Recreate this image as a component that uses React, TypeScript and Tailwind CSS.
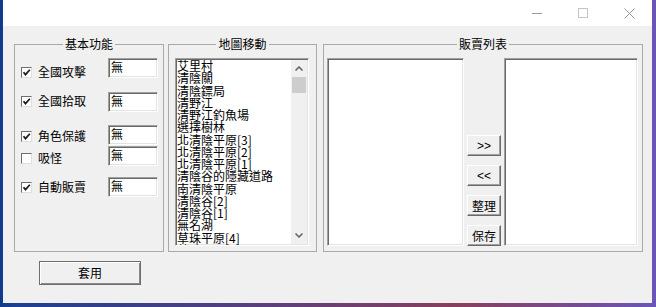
import React from "react";

const FONT = "font-['Noto_Sans_CJK_TC','Noto_Sans_CJK_SC',sans-serif]";

function Check({ checked }: { checked: boolean }) {
  return (
    <span className="w-[11px] h-[11px] shrink-0 bg-white border border-t-[#6e6e6e] border-l-[#6e6e6e] border-b-[#dedede] border-r-[#dedede] flex items-center justify-center">
      {checked && (
        <svg width="9" height="9" viewBox="0 0 9 9">
          <path d="M1.5 4.2 L3.5 6.6 L7.8 1.8" stroke="#1a1a1a" strokeWidth="1.7" fill="none" />
        </svg>
      )}
    </span>
  );
}

function Sunken({ className = "", children }: { className?: string; children?: React.ReactNode }) {
  return (
    <div
      className={
        "bg-white border border-t-[#a0a0a0] border-l-[#a0a0a0] border-b-white border-r-white shadow-[inset_1px_1px_0_#696969,inset_-1px_-1px_0_#e3e3e3] " +
        className
      }
    >
      {children}
    </div>
  );
}

function Btn({ children, className = "" }: { children: React.ReactNode; className?: string }) {
  return (
    <div
      className={
        "bg-[#f0f0f0] border border-t-white border-l-white border-b-[#696969] border-r-[#696969] shadow-[inset_-1px_-1px_0_#a0a0a0] flex items-center justify-center text-[12px] text-black " +
        className
      }
    >
      {children}
    </div>
  );
}

function Group({ title, className = "", children }: { title: string; className?: string; children: React.ReactNode }) {
  return (
    <fieldset className={"border border-[#a9a9a9] h-[215px] " + className}>
      <legend className="mx-auto px-[2px] text-[12px] leading-[14px] text-black">{title}</legend>
      {children}
    </fieldset>
  );
}

const rows = [
  { label: "全國攻擊", checked: true, mt: "mt-[14px]" },
  { label: "全國拾取", checked: true, mt: "mt-[15px]" },
  { label: "角色保護", checked: true, mt: "mt-[21px]" },
  { label: "吸怪", checked: false, mt: "mt-[8px]" },
  { label: "自動販賣", checked: true, mt: "mt-[15px]" },
];
const inputMts = ["mt-[7px]", "mt-[14px]", "mt-[13px]", "mt-[1px]", "mt-[11px]"];

const maps = [
  "艾里村",
  "清陰關",
  "清陰鏢局",
  "清野江",
  "清野江釣魚場",
  "選擇樹林",
  "北清陰平原[3]",
  "北清陰平原[2]",
  "北清陰平原[1]",
  "清陰谷的隱藏道路",
  "南清陰平原",
  "清陰谷[2]",
  "清陰谷[1]",
  "無名湖",
  "草珠平原[4]",
  "草珠平原[3]",
];

export default function App() {
  return (
    <div
      className={
        "w-[656px] h-[307px] pl-[3px] pr-[4px] pb-[4px] flex flex-col overflow-hidden bg-[linear-gradient(90deg,#0f3a8c_0%,#1d3f93_2%,#5b3f7e_40%,#8a3f5e_70%,#6a55b8_100%)] " +
        FONT
      }
    >
      <div className="flex-1 flex flex-col bg-[#f0f0f0]">
        {/* title bar */}
        <div className="h-[26px] bg-white flex justify-end shrink-0">
          <div className="w-[46px] h-[26px] flex items-center justify-center">
            <svg width="10" height="10" viewBox="0 0 10 10">
              <path d="M0 5.5 H10" stroke="#9a9a9a" strokeWidth="1" />
            </svg>
          </div>
          <div className="w-[46px] h-[26px] flex items-center justify-center">
            <svg width="10" height="10" viewBox="0 0 10 10">
              <rect x="0.5" y="0.5" width="9" height="9" stroke="#c4c4c4" strokeWidth="1" fill="none" />
            </svg>
          </div>
          <div className="w-[46px] h-[26px] flex items-center justify-center">
            <svg width="11" height="11" viewBox="0 0 11 11">
              <path d="M0.5 0.5 L10.5 10.5 M10.5 0.5 L0.5 10.5" stroke="#9a9a9a" strokeWidth="1" />
            </svg>
          </div>
        </div>

        {/* client */}
        <div className="flex-1 pt-[11px] pl-[11px] flex flex-col">
          <div className="flex">
            {/* 基本功能 */}
            <Group title="基本功能" className="w-[150px]">
              <div className="flex justify-between pl-[6px] pr-[5px]">
                <div className="flex flex-col">
                  {rows.map((r) => (
                    <div key={r.label} className={"h-[14px] flex items-center gap-[6px] " + r.mt}>
                      <Check checked={r.checked} />
                      <span className="text-[12px] leading-[14px] text-black">{r.label}</span>
                    </div>
                  ))}
                </div>
                <div className="flex flex-col">
                  {inputMts.map((mt, i) => (
                    <Sunken key={i} className={"w-[50px] h-[20px] " + mt}>
                      <div className="pl-[2px] pt-[1px] text-[12px] leading-[14px] text-black">無</div>
                    </Sunken>
                  ))}
                </div>
              </div>
            </Group>

            {/* 地圖移動 */}
            <Group title="地圖移動" className="w-[149px] ml-[4px]">
              <div className="pl-[6px] pt-[7px]">
                <Sunken className="w-[134px] h-[188px] flex overflow-hidden">
                  <div className="flex-1 pl-[1px] pt-[1px] overflow-hidden">
                    {maps.map((m) => (
                      <div key={m} className="text-[12px] leading-[12.25px] h-[12.25px] whitespace-nowrap text-black">
                        {m}
                      </div>
                    ))}
                  </div>
                  <div className="w-[16px] mr-[1px] my-[1px] bg-[#f0f0f0] flex flex-col items-center">
                    <div className="h-[17px] w-full flex items-center justify-center">
                      <svg width="8" height="5" viewBox="0 0 8 5">
                        <path d="M0.5 4.5 L4 1 L7.5 4.5" stroke="#606060" strokeWidth="1.5" fill="none" />
                      </svg>
                    </div>
                    <div className="w-[14px] h-[16px] bg-[#cdcdcd]" />
                    <div className="flex-1" />
                    <div className="h-[17px] w-full flex items-center justify-center">
                      <svg width="8" height="5" viewBox="0 0 8 5">
                        <path d="M0.5 0.5 L4 4 L7.5 0.5" stroke="#606060" strokeWidth="1.5" fill="none" />
                      </svg>
                    </div>
                  </div>
                </Sunken>
              </div>
            </Group>

            {/* 販賣列表 */}
            <Group title="販賣列表" className="w-[320px] ml-[6px]">
              <div className="pl-[3px] pt-[7px] flex">
                <Sunken className="w-[137px] h-[188px]" />
                <div className="w-[34px] ml-[3px] h-[188px] flex flex-col justify-end gap-[9px]">
                  <Btn className="h-[21px] font-['Liberation_Sans',sans-serif] text-[11px]">&gt;&gt;</Btn>
                  <Btn className="h-[21px] font-['Liberation_Sans',sans-serif] text-[11px]">&lt;&lt;</Btn>
                  <Btn className="h-[21px]">整理</Btn>
                  <Btn className="h-[21px]">保存</Btn>
                </div>
                <Sunken className="w-[134px] h-[188px] ml-[3px]" />
              </div>
            </Group>
          </div>

          <div className="mt-[9px] ml-[25px]">
            <div className="w-[102px] h-[24px] border border-[#6d6d6d] bg-[#f0f0f0] shadow-[inset_1px_1px_0_#ffffff,inset_-1px_-1px_0_#8a8a8a] flex items-center justify-center text-[12px] text-black">
              套用
            </div>
          </div>
        </div>
      </div>
    </div>
  );
}
